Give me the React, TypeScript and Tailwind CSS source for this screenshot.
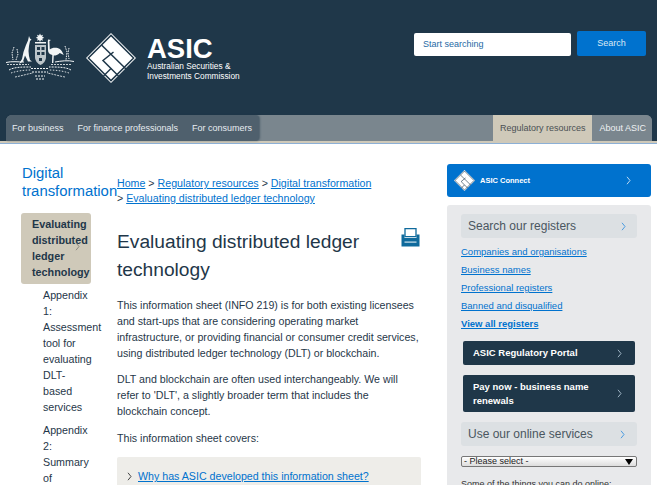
import React from "react";

const Chevron = ({ className = "" }: { className?: string }) => (
  <svg width="5" height="9" viewBox="0 0 5 9" fill="none" className={className}>
    <path d="M1 .8 4 4.5 1 8.2" stroke="currentColor" strokeWidth="1" />
  </svg>
);

const AsicMark = ({ size }: { size: number }) => (
  <svg width={size} height={size} viewBox="0 0 50 50" className="shrink-0">
    <path d="M25 0 50 25 25 50 0 25Z" fill="#fff" />
    <path d="M25 2.400 47.600 25 25 47.600 2.400 25Z" fill="#fff" stroke="#1f3749" strokeWidth="1.500" />
    <g fill="none" stroke="#1f3749" strokeWidth="1.500">
      <path d="M15.500 12 40 36" />
      <path d="M27.500 19 17 27.500 25 35.500 32.500 43" />
      <path d="M25 35.500 17.500 43" />
    </g>
  </svg>
);

const Crest = () => (
  <svg width="70" height="50" viewBox="0 0 70 50" className="shrink-0">
    <g fill="#f2f5f6">
      <path d="M35 .500l1 2 2-.8-.8 2 2 1-2 1 .8 2-2-.8-1 2-1-2-2 .8.8-2-2-1 2-1-.8-2 2 .8z" />
      <rect x="30" y="9" width="11" height="1.500" />
      <path d="M24 3l1 2.500 1.500 1-1.500 1.500-1 5-.5 5 .5 5 1 4 2 1.500h-4l-2-4-1-2-2 6-4 2.500 3-5 1.500-7 2.500-7 2-4.500z" />
      <path d="M43 6.500l3 .4-1.600 1.200.4 8.400c2-2 7-2.500 10-.5 2 1.300 3 4 4 6l-4-2c-2 2-4 2.500-6 2.500l-.5 7.500h-1.300l.3-8c-3-.5-4.300-2.500-4.300-5l-.2-8z" />
      <path d="M30 12h11v12c0 4-3 7-5.500 8-2.500-1-5.500-4-5.500-8z" opacity=".75" />
    </g>
    <g fill="#1f3749">
      <rect x="32" y="14" width="3" height="3" />
      <rect x="36.500" y="14" width="3" height="3" />
      <rect x="32" y="19" width="3" height="3" />
      <rect x="36.500" y="19" width="3" height="3" />
      <rect x="34" y="25" width="3" height="3" />
    </g>
    <g stroke="#f2f5f6" strokeWidth="1" fill="none">
      <path d="M1 29.500c6-1.500 12-.5 18-.5M69 28.500c-6-1.500-13-.5-19 .5" />
      <path d="M2 31.500h22M46 31.500h21" strokeDasharray="2 1" opacity=".8" />
      <path d="M4 37c5-3 13-3 22-3M66 37c-5-3-13-3-22-3" strokeDasharray="2 1" />
      <path d="M6 40c6-2 13-3 20-3M64 40c-6-2-13-3-20-3" strokeDasharray="1.500 1.500" opacity=".85" />
      <path d="M10 44c6-1 12-3 18-4M60 44c-6-1-12-3-18-4" strokeDasharray="2 1" opacity=".8" />
      <path d="M26 35.500h18M27 39h16M30 43h10M31 46h8" strokeDasharray="2 1" />
      <path d="M9 14l-2 6 1 7M12 16l1 5-2 6" strokeDasharray="1.500 1" />
      <path d="M60 13l2 6-1 8M64 15l-1 5 1 6" strokeDasharray="1.500 1" />
    </g>
  </svg>
);

const PrintIcon = () => (
  <svg width="19" height="19" viewBox="0 0 19 19" className="shrink-0">
    <path d="M4 .700h11v8H4z" fill="#fff" stroke="#0f6a9c" strokeWidth="1.300" />
    <path d="M.500 6.500h3V10h12V6.500h3V18.500H.500z" fill="#0f6a9c" />
    <rect x="3.500" y="13.500" width="12" height="1.200" fill="#cfe3ee" />
  </svg>
);

const link = "text-[#0072ce] underline";

export default function App() {
  return (
    <div className="h-[485px] w-[657px] overflow-hidden bg-white font-['Liberation_Sans',Arial,sans-serif] text-[#1f3749]">
      <header className="flex h-[141px] flex-col bg-[#1f3749]">
        <div className="flex h-[115px] items-start">
          <div className="mt-[33px] ml-[5px]"><Crest /></div>
          <div className="mt-[33px] ml-[11px]"><AsicMark size={50} /></div>
          <div className="mt-[37px] ml-[11px] w-[94px] text-white">
            <div className="text-[27.500px] leading-[24px] font-bold">ASIC</div>
            <div className="text-[8.300px] leading-[10px] whitespace-nowrap">Australian Securities &amp;<br />Investments Commission</div>
          </div>
          <div className="mt-[33px] ml-[173px] flex h-[23px] w-[157px] items-center rounded-[2px] bg-white pl-[9px] text-[9px] text-[#1f6aa5]">
            Start searching
          </div>
          <div className="mt-[31px] ml-[6px] flex h-[25px] w-[69px] items-center justify-center rounded-[2px] bg-[#0072ce] text-[9px] text-[#dbe9f5]">
            Search
          </div>
        </div>
        <nav className="mx-[6px] mr-[5px] flex h-[26px] items-center rounded-t-[6px] bg-[#7a868e] text-[9px] leading-[26px] text-white">
          <div className="flex h-full items-center gap-[14px] rounded-tl-[6px] rounded-r-[4px] bg-[#4f606d] pr-[7px] pl-[6px] text-[#e7edf1] shadow-[1px_0_2px_rgba(31,55,73,0.5)]">
            <span>For business</span>
            <span>For finance professionals</span>
            <span>For consumers</span>
          </div>
          <div className="ml-auto flex h-full">
            <div className="bg-[#cfc9b9] px-[7px] text-[#4a5054]">Regulatory resources</div>
            <div className="rounded-tr-[6px] bg-[#7a868e] pr-[6px] pl-[7px] text-[#eef1f3]">About ASIC</div>
          </div>
        </nav>
      </header>
      <div className="h-[2px] bg-[#cfc9b9]" />
      <div className="h-[1px] bg-[#8cb0d6]" />

      <div className="flex">
        <aside className="ml-[21px] w-[96px] shrink-0">
          <div className="mt-[21px] ml-[1px] text-[14.900px] leading-[17.500px] whitespace-nowrap text-[#0072ce]">Digital<br />transformation</div>
          <div className="relative mt-[13px] mr-[26px] w-[70px] rounded-[3px] bg-[#cfc9b9] pt-[3px] pb-[4px] pl-[11px] text-[10.800px] leading-[16px] font-bold whitespace-nowrap">
            Evaluating<br />distributed<br />ledger<br />technology
            <Chevron className="absolute top-[29px] right-[11px] text-[#8d8a80]" />
          </div>
          <div className="mt-[3px] pl-[22px] text-[10.700px] leading-[16px]">
            <div>Appendix<br />1:<br />Assessment<br />tool for<br />evaluating<br />DLT-<br />based<br />services</div>
            <div className="mt-[7px]">Appendix<br />2:<br />Summary<br />of</div>
          </div>
        </aside>

        <main className="w-[304px] shrink-0 pt-[32px] text-[10.650px] leading-[16px]">
          <div className="leading-[15px] whitespace-nowrap">
            <span className={link}>Home</span> &gt; <span className={link}>Regulatory resources</span> &gt; <span className={link}>Digital transformation</span><br />
            &gt; <span className={link}>Evaluating distributed ledger technology</span>
          </div>
          <div className="mt-[22px] flex justify-between">
            <h1 className="text-[19.200px] leading-[28px] font-normal">Evaluating distributed ledger<br />technology</h1>
            <div className="mr-[1px]"><PrintIcon /></div>
          </div>
          <p className="mt-[13px] whitespace-nowrap">This information sheet (INFO 219) is for both existing licensees<br />and start-ups that are considering operating market<br />infrastructure, or providing financial or consumer credit services,<br />using distributed ledger technology (DLT) or blockchain.</p>
          <p className="mt-[10px] whitespace-nowrap">DLT and blockchain are often used interchangeably. We will<br />refer to 'DLT', a slightly broader term that includes the<br />blockchain concept.</p>
          <p className="mt-[11px]">This information sheet covers:</p>
          <div className="mt-[11px] flex h-[40px] items-start gap-[6px] rounded-[2px] bg-[#eeede9] pt-[11px] pl-[10px]">
            <Chevron className="mt-[4px] text-[#444]" />
            <span className={link}>Why has ASIC developed this information sheet?</span>
          </div>
        </main>

        <aside className="mt-[20px] ml-[26px] w-[204px] shrink-0">
          <div className="flex h-[33px] items-center rounded-[3px] bg-[#0072ce] pr-[20px] pl-[7px] text-[7.500px] font-bold text-white">
            <AsicMark size={21} />
            <span className="ml-[5px]">ASIC Connect</span>
            <Chevron className="ml-auto text-[#bcd9f2]" />
          </div>
          <div className="mt-[8px] h-[300px] rounded-t-[3px] bg-[#e8e9eb] px-[14px] pt-[9px] text-[9.500px] leading-[18px]">
            <div className="flex h-[24px] items-center justify-between rounded-[3px] bg-[#dce0e3] pr-[11px] pl-[7px] text-[12px] text-[#4a5660]">
              Search our registers <Chevron className="text-[#4a9be0]" />
            </div>
            <div className="mt-[5px]"><span className={link}>Companies and organisations</span></div>
            <div><span className={link}>Business names</span></div>
            <div><span className={link}>Professional registers</span></div>
            <div><span className={link}>Banned and disqualified</span></div>
            <div className="font-bold"><span className={link}>View all registers</span></div>
            <div className="mt-[8px] mr-[2px] ml-[2px] flex h-[24px] items-center justify-between rounded-[2px] bg-[#1f3749] pr-[13px] pl-[10px] font-bold text-white">
              ASIC Regulatory Portal <Chevron className="text-[#9fb4c4]" />
            </div>
            <div className="mt-[10px] mr-[2px] ml-[2px] flex h-[37px] items-center justify-between rounded-[2px] bg-[#1f3749] pr-[13px] pl-[10px] leading-[13.500px] font-bold text-white">
              <span>Pay now - business name<br />renewals</span> <Chevron className="text-[#9fb4c4]" />
            </div>
            <div className="mt-[10px] flex h-[24px] items-center justify-between rounded-[3px] bg-[#dce0e3] pr-[12px] pl-[7px] text-[12px] text-[#4a5660]">
              Use our online services <Chevron className="text-[#4a9be0]" />
            </div>
            <div className="mt-[10px] flex h-[11px] items-center justify-between rounded-[2px] border border-[#777] bg-gradient-to-b from-white to-[#ddd] pr-[3px] pl-[2px] text-[9px] leading-[9px] text-[#222]">
              - Please select -
              <span className="h-0 w-0 border-x-[4px] border-t-[6px] border-x-transparent border-t-black" />
            </div>
            <div className="mt-[8px] text-[9px] whitespace-nowrap text-[#333]">Some of the things you can do online:</div>
          </div>
        </aside>
      </div>
    </div>
  );
}
